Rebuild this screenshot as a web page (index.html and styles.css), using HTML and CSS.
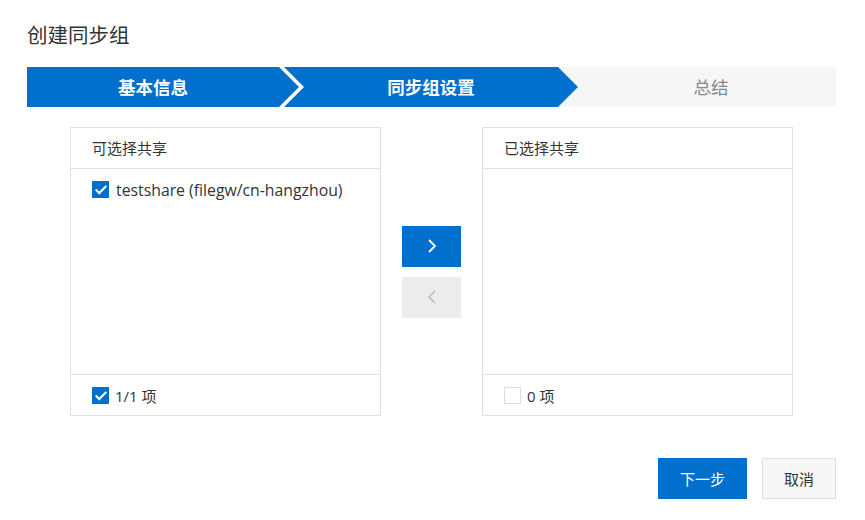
FILE: index.html
```html
<!DOCTYPE html>
<html>
<head>
	<meta charset="UTF-8">
	<title>创建同步组</title>
	<link rel="stylesheet" href="styles.css">
</head>
<body>
	<div class="page">
		<h1 class="title">创建同步组</h1>

		<div class="steps">
			<div class="step first done">基本信息</div>
			<div class="step current">同步组设置</div>
			<div class="step last">总结</div>
		</div>

		<div class="transfer">
			<div class="panel">
				<div class="panel-head">可选择共享</div>
				<div class="panel-body">
					<label class="item">
						<span class="check on"></span>
						<span>testshare (filegw/cn-hangzhou)</span>
					</label>
				</div>
				<div class="panel-foot">
					<span class="check on"></span>
					<span>1/1 项</span>
				</div>
			</div>

			<div class="moves">
				<button class="move active">
					<svg width="12" height="16" viewBox="0 0 12 16"><path d="M3 2l6 6-6 6" fill="none" stroke="#fff" stroke-width="1.8"/></svg>
				</button>
				<button class="move">
					<svg width="12" height="16" viewBox="0 0 12 16"><path d="M9 2L3 8l6 6" fill="none" stroke="#bbb" stroke-width="1.5"/></svg>
				</button>
			</div>

			<div class="panel">
				<div class="panel-head">已选择共享</div>
				<div class="panel-body"></div>
				<div class="panel-foot">
					<span class="check"></span>
					<span>0 项</span>
				</div>
			</div>
		</div>

		<div class="actions">
			<button class="btn primary">下一步</button>
			<button class="btn">取消</button>
		</div>
	</div>
</body>
</html>
```

FILE: styles.css
```css
body {
	margin: 0;
	background: #fff;
	font-family: "Open Sans", "Noto Sans CJK SC", sans-serif;
	color: #333;
}

.page {
	padding: 20px 29px 0 27px;
}

.title {
	margin: 0;
	font-size: 20.5px;
	line-height: 30px;
	font-weight: normal;
	color: #333;
}

/* 步骤条 */
.steps {
	display: flex;
	height: 40px;
	margin-top: 17px;
}

.step {
	height: 40px;
	line-height: 40px;
	text-align: center;
	font-size: 17.5px;
	font-weight: bold;
	color: #fff;
	background: #0070cc;
	position: relative;
}

.step.first {
	width: 272px;
	padding-right: 20px;
	box-sizing: border-box;
	clip-path: polygon(0 0, 252px 0, 272px 20px, 252px 40px, 0 40px);
	z-index: 2;
}

.step.current {
	width: 294px;
	margin-left: -15px;
	clip-path: polygon(0 0, 274px 0, 294px 20px, 274px 40px, 0 40px, 20px 20px);
	z-index: 2;
}

.step.last {
	flex: 1;
	margin-left: -20px;
	padding-left: 28px;
	background: #f6f6f6;
	color: #888;
	font-weight: normal;
	z-index: 1;
}

/* 穿梭框 */
.transfer {
	display: flex;
	justify-content: center;
	gap: 21px;
	margin-top: 20px;
}

.panel {
	width: 311px;
	height: 289px;
	border: 1px solid #e0e0e0;
	box-sizing: border-box;
	display: flex;
	flex-direction: column;
	font-size: 15px;
}

.panel-head {
	height: 41px;
	line-height: 40px;
	padding-left: 21px;
	border-bottom: 1px solid #e0e0e0;
	box-sizing: border-box;
}

.panel-body {
	flex: 1;
	padding: 12px 21px 0;
}

.item {
	display: flex;
	align-items: center;
	gap: 7px;
	font-size: 15.8px;
	height: 17px;
}

.panel-foot {
	height: 41px;
	border-top: 1px solid #e0e0e0;
	box-sizing: border-box;
	display: flex;
	align-items: center;
	gap: 6px;
	padding-left: 21px;
}

.check {
	width: 17px;
	height: 17px;
	box-sizing: border-box;
	border: 1px solid #ddd;
	background: #fff;
	position: relative;
	flex: none;
}

.check.on {
	background: #0070cc;
	border-color: #0070cc;
}

.check.on::after {
	content: "";
	position: absolute;
	left: 5px;
	top: 1px;
	width: 4px;
	height: 9px;
	border: solid #fff;
	border-width: 0 2px 2px 0;
	transform: rotate(45deg);
}

.moves {
	display: flex;
	flex-direction: column;
	justify-content: center;
	gap: 10px;
}

.move {
	width: 59px;
	height: 41px;
	border: none;
	background: #ececec;
	padding: 0;
	display: flex;
	align-items: center;
	justify-content: center;
}

.move.active {
	background: #0070cc;
}

/* 底部按钮 */
.actions {
	display: flex;
	justify-content: flex-end;
	gap: 15px;
	margin-top: 42px;
}

.btn {
	height: 41px;
	width: 74px;
	border: 1px solid #ddd;
	background: #f7f7f7;
	font-family: "Noto Sans CJK SC", sans-serif;
	font-size: 15px;
	color: #333;
	padding: 0;
}

.btn.primary {
	width: 89px;
	background: #0070cc;
	border-color: #0070cc;
	color: #fff;
}
```
